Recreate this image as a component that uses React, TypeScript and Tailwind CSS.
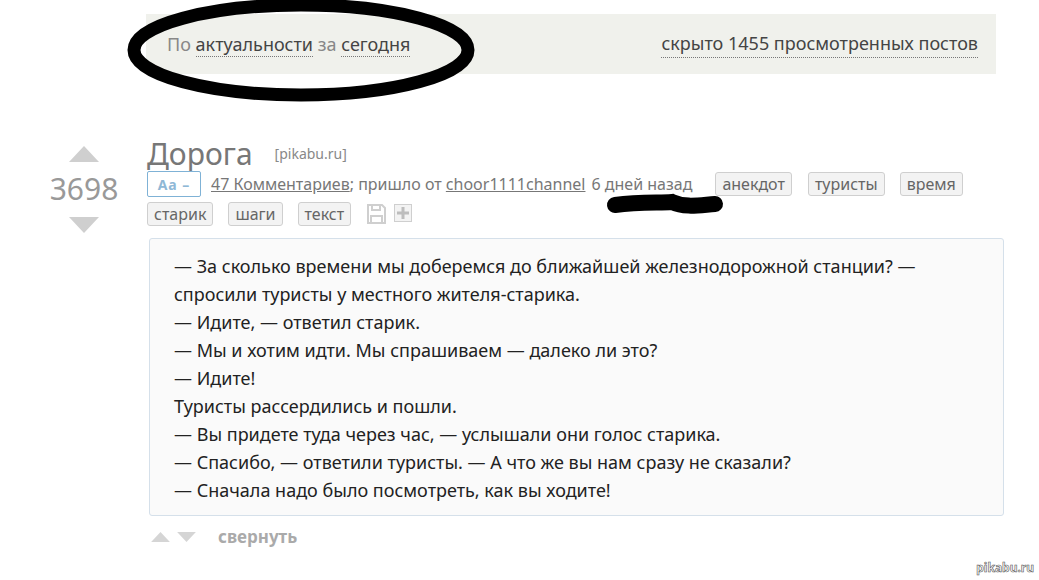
import React from "react";

const lines = [
  "— За сколько времени мы доберемся до ближайшей железнодорожной станции? —",
  "спросили туристы у местного жителя-старика.",
  "— Идите, — ответил старик.",
  "— Мы и хотим идти. Мы спрашиваем — далеко ли это?",
  "— Идите!",
  "Туристы рассердились и пошли.",
  "— Вы придете туда через час, — услышали они голос старика.",
  "— Спасибо, — ответили туристы. — А что же вы нам сразу не сказали?",
  "— Сначала надо было посмотреть, как вы ходите!",
];

const Tag = ({ children, className = "" }: { children: string; className?: string }) => (
  <span
    className={`flex h-[24px] items-center rounded-[3px] border border-[#cfcfcf] bg-[#f3f3f3] px-[6px] text-[16px] text-[#666] ${className}`}
  >
    {children}
  </span>
);

const Arrow = ({ up, w, h, color }: { up?: boolean; w: number; h: number; color: string }) => (
  <svg width={w} height={h} viewBox="0 0 30 16">
    <path d={up ? "M15 0 L30 16 H0 Z" : "M0 0 H30 L15 16 Z"} fill={color} />
  </svg>
);

export default function App() {
  return (
    <div className="relative h-[580px] w-[1039px] overflow-hidden bg-white font-['Noto_Sans',sans-serif]">
      <div className="pt-[14px] pl-[146px]">
        <div className="flex h-[60px] w-[850px] items-center justify-between bg-[#f0f1ec] pr-[18px] pl-[21px] text-[18px]">
          <div className="text-[#888]">
            По{" "}
            <span className="border-b border-dotted border-[#777] text-[#444]">актуальности</span> за{" "}
            <span className="border-b border-dotted border-[#777] text-[#444]">сегодня</span>
          </div>
          <span className="border-b border-dotted border-[#777] text-[#444]">скрыто 1455 просмотренных постов</span>
        </div>
      </div>

      <div className="mt-[60px] flex">
        <div className="flex w-[147px] shrink-0 flex-col items-center pt-[12px] pl-[21px]">
          <Arrow up w={30} h={16} color="#cfcfcf" />
          <div className="mt-[9px] text-[30px] leading-[36px] text-[#999]">3698</div>
          <div className="mt-[10px]">
            <Arrow w={30} h={16} color="#cfcfcf" />
          </div>
        </div>

        <div className="w-[857px]">
          <div className="flex h-[38px] items-center">
            <span className="text-[30px] text-[#777]">Дорога</span>
            <span className="ml-[22px] text-[14px] text-[#888]">[pikabu.ru]</span>
          </div>

          <div className="flex h-[24px] items-center text-[16px] text-[#777]">
            <span className="flex h-[26px] w-[54px] items-center justify-center rounded-[2px] border border-[#7fb2d6] text-[14px] font-bold tracking-[1px] text-[#8fb8d6]">
              Aa –
            </span>
            <span className="ml-[10px] underline">47 Комментариев</span>
            <span>; пришло от&nbsp;</span>
            <span className="underline">choor1111channel</span>
            <span className="ml-[6px]">6 дней назад</span>
            <Tag className="ml-[23px]">анекдот</Tag>
            <Tag className="ml-[16px]">туристы</Tag>
            <Tag className="ml-[15px]">время</Tag>
          </div>

          <div className="mt-[6px] flex h-[24px] items-center">
            <Tag>старик</Tag>
            <Tag className="ml-[15px]">шаги</Tag>
            <Tag className="ml-[15px]">текст</Tag>
            <svg className="ml-[16px]" width="19" height="20" viewBox="0 0 19 20" fill="none" stroke="#cfcfcf" strokeWidth="2">
              <path d="M1 1 H15 L18 4 V19 H1 Z" />
              <path d="M5 1 V6 H13 V1" />
              <path d="M4 19 V12 H15 V19" />
            </svg>
            <svg className="ml-[8px] mb-[2px]" width="18" height="18" viewBox="0 0 18 18">
              <rect x="0.5" y="0.5" width="17" height="17" fill="#f3f3f3" stroke="#cfcfcf" />
              <path d="M9 3 V15 M3 9 H15" stroke="#bdbdbd" strokeWidth="3" />
            </svg>
          </div>

          <div className="mt-[12px] ml-[2px] h-[278px] w-[855px] rounded-[3px] border border-[#d5e0ea] bg-[#fafafa] py-[13px] pl-[24px] text-[18px] leading-[28px] text-[#222]">
            {lines.map((line) => (
              <div key={line}>{line}</div>
            ))}
          </div>

          <div className="mt-[8px] ml-[4px] flex items-center">
            <Arrow up w={19} h={10} color="#d5d5d5" />
            <span className="ml-[7px]">
              <Arrow w={19} h={10} color="#d5d5d5" />
            </span>
            <span className="ml-[22px] text-[17px] font-bold text-[#aaa]">свернуть</span>
          </div>
        </div>
      </div>

      <svg className="absolute top-0 left-0" width="1039" height="580" fill="none">
        <ellipse cx="301" cy="50" rx="167" ry="45" stroke="#000" strokeWidth="13" />
        <path d="M615 205 C640 202 660 203 672 202 C685 208 700 205 715 204" stroke="#000" strokeWidth="16" strokeLinecap="round" />
      </svg>

      <span className="absolute right-[5px] bottom-[3px] text-[12px] font-bold text-white [-webkit-text-stroke:0.6px_#555]">
        pikabu.ru
      </span>
    </div>
  );
}
